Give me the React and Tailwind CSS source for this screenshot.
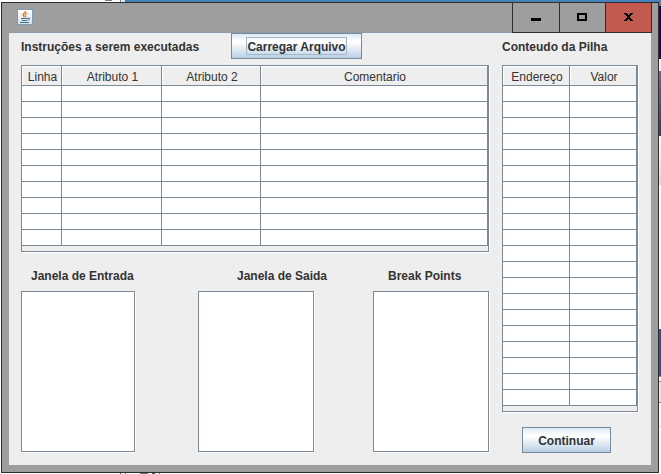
const rowsOf = (count) => Array.from({ length: count }, (_, i) => i);

function DataTable({ label, columns, rowCount }) {
  return (
    <div className="mr-px mb-px border border-[#7a8a99] pb-[5px] shadow-[1px_1px_0_0_#ffffff]">
      <table aria-label={label} className="w-full table-fixed border-separate border-spacing-0">
        <colgroup>
          {columns.map((c) => (
            <col key={c.name} className={c.width} />
          ))}
        </colgroup>
        <thead>
          <tr>
            {columns.map((c) => (
              <th
                key={c.name}
                scope="col"
                className="h-5 border-r border-b border-[#7a8a99] bg-[#eeeeee] p-0 pt-0.5 pl-0.5 text-center text-[12px] leading-4 font-normal whitespace-nowrap shadow-[inset_1px_1px_0_0_#ffffff]"
              >
                {c.name}
              </th>
            ))}
          </tr>
        </thead>
        <tbody>
          {rowsOf(rowCount).map((r) => (
            <tr key={r}>
              {columns.map((c) => (
                <td key={c.name} className="h-4 border-r border-b border-[#7a8a99] bg-white p-0" />
              ))}
            </tr>
          ))}
        </tbody>
      </table>
    </div>
  );
}

function MetalButton({ children, className, focused }) {
  return (
    <button
      type="button"
      className={`flex h-[26px] items-center justify-center border border-[#7a8a99] bg-[linear-gradient(#dde8f3_0%,#ffffff_30%,#ffffff_36%,#b8cfe5_100%)] text-[12px] font-bold whitespace-nowrap ${className}`}
    >
      <span className={`border pt-0.5 leading-[14px] ${focused ? "border-[#a3b8cc]" : "border-transparent"}`}>
        {children}
      </span>
    </button>
  );
}

function TextPane({ id, label, labelClass, boxClass }) {
  return (
    <div className="flex min-w-0 flex-col">
      <label htmlFor={id} className={`mb-[7px] text-[12px] leading-4 font-bold whitespace-nowrap ${labelClass}`}>
        {label}
      </label>
      <textarea
        id={id}
        className={`mb-px block h-[161px] grow resize-none border border-[#7a8a99] bg-white p-1 text-[12px] shadow-[1px_1px_0_0_#ffffff] outline-none ${boxClass}`}
      />
    </div>
  );
}

function JavaIcon() {
  return (
    <svg width="16" height="16" viewBox="0 0 16 16" aria-hidden="true">
      <defs>
        <linearGradient id="tile" x1="0" y1="0" x2="0" y2="1">
          <stop offset="0" stopColor="#ffffff" />
          <stop offset="1" stopColor="#d5dfe7" />
        </linearGradient>
      </defs>
      <rect x="0.5" y="0.5" width="15" height="15" fill="url(#tile)" stroke="#7e9db5" />
      <path d="M8.6 2C9.2 3.8 5.6 4.4 6.2 6.2C6.4 7 7 7.4 7.2 8.2" fill="none" stroke="#ee7d22" strokeWidth="1.5" />
      <path d="M10.4 4.2C8.4 5 7.8 5.7 8.4 6.6C8.9 7.3 8.7 7.9 8.2 8.4" fill="none" stroke="#ee7d22" strokeWidth="1.2" />
      <path d="M4 9.5H11M4.8 11.5H10.2M3 13.5H12" stroke="#42708f" />
      <path d="M11 9C13.4 8.6 13.2 10.8 10.8 11.2" fill="none" stroke="#42708f" />
    </svg>
  );
}

function TitleBar() {
  const base = "flex h-[31px] items-center justify-center border border-[#2e2e30]";
  return (
    <header className="relative -mt-px flex h-[31px] items-start justify-between">
      <div className="mt-[7px] ml-2">
        <JavaIcon />
      </div>
      <div className="-mr-px flex">
        <button type="button" aria-label="Minimizar" className={`${base} w-12`}>
          <svg width="12" height="9" viewBox="0 0 12 9">
            <rect x="1" y="5" width="10" height="3" fill="#000000" />
          </svg>
        </button>
        <button type="button" aria-label="Maximizar" className={`${base} -ml-px w-[47px]`}>
          <svg width="11" height="9" viewBox="0 0 11 9">
            <rect x="1" y="1" width="8" height="6" fill="none" stroke="#000000" strokeWidth="2" />
          </svg>
        </button>
        <button type="button" aria-label="Fechar" className={`${base} -ml-px w-[47px] bg-[#c35a50]`}>
          <svg width="9" height="9" viewBox="0 0 9 9">
            <path
              d="M0 0H3V1H4V2H5V1H6V0H9V1H8V2H7V3H6V5H7V6H8V7H9V8H6V7H5V6H4V7H3V8H0V7H1V6H2V5H3V3H2V2H1V1H0Z"
              fill="#000000"
            />
          </svg>
        </button>
      </div>
    </header>
  );
}

const instructionColumns = [
  { name: "Linha", width: "w-10" },
  { name: "Atributo 1", width: "w-[100px]" },
  { name: "Atributo 2", width: "w-[99px]" },
  { name: "Comentario", width: "w-auto" },
];

const stackColumns = [
  { name: "Endereço", width: "w-1/2" },
  { name: "Valor", width: "w-1/2" },
];

export default function App() {
  return (
    <div className="flex min-h-screen flex-col bg-white font-['Liberation_Sans',Arial,sans-serif] text-[#333333]">
      {/* Desktop showing above the window */}
      <div className="flex h-[2px] shrink-0">
        <div className="w-[105px]" />
        <div className="h-px w-[7px] bg-[#777b86]" />
        <div className="w-2" />
        <div className="w-px bg-[#8a8a8a]" />
        <div className="w-1 bg-[#e4e4e4]" />
        <div className="grow bg-[#4682b8]" />
      </div>

      <div className="flex grow">
        <div className="w-px shrink-0" />
        <div className="flex min-w-0 grow flex-col border border-[#2e2e30] bg-[#9e9e9e] px-[7px] pb-[7px]">
          <TitleBar />
          <main className="-mt-px flex grow gap-3 border-t border-[#8c9cad] bg-[#eeeeee] px-3 pb-3">
            <section className="flex min-w-0 grow flex-col">
              <div className="flex h-[26px] items-center">
                <h1 className="w-[210px] pt-0.5 text-[12px] leading-4 font-bold whitespace-nowrap">
                  Instruções a serem executadas
                </h1>
                <MetalButton className="w-[131px]" focused>
                  Carregar Arquivo
                </MetalButton>
              </div>
              <div className="mt-[6px]">
                <DataTable label="Instruções a serem executadas" columns={instructionColumns} rowCount={10} />
              </div>
              <div className="mt-[15px] grid grow grid-cols-[177fr_175fr_117fr]">
                <TextPane id="entrada" label="Janela de Entrada" labelClass="pl-[10px]" boxClass="w-[114px]" />
                <TextPane id="saida" label="Janela de Saida" labelClass="pl-[39px]" boxClass="w-[116px]" />
                <TextPane id="breaks" label="Break Points" labelClass="pl-[15px]" boxClass="w-[116px]" />
              </div>
            </section>

            <section className="flex w-[137px] shrink-0 flex-col">
              <div className="flex h-[26px] items-center">
                <h2 className="pt-0.5 text-[12px] leading-4 font-bold whitespace-nowrap">Conteudo da Pilha</h2>
              </div>
              <div className="mt-[6px]">
                <DataTable label="Conteudo da Pilha" columns={stackColumns} rowCount={20} />
              </div>
              <MetalButton className="mt-[14px] ml-5 w-[89px]">Continuar</MetalButton>
            </section>
          </main>
        </div>

        {/* Desktop showing to the right of the window */}
        <div className="flex w-[2px] shrink-0 flex-col">
          <div className="h-1 bg-[#4682b8]" />
          <div className="h-[53px] bg-[#04106a]" />
          <div className="h-3 bg-[#f4f4f4]" />
          <div className="h-[65px] bg-linear-to-b from-[#5b7099] to-[#27407e]" />
          <div className="h-[49px] bg-linear-to-b from-white to-[#dddddd]" />
          <div className="h-36" />
          <div className="h-[47px] bg-[#1f5a9f]" />
          <div className="h-px bg-[#8a8a8a]" />
          <div className="h-1" />
          <div className="h-px bg-[#8a8a8a]" />
          <div className="h-5 bg-[#e9e7e5]" />
          <div className="h-px bg-[#8a8a8a]" />
          <div className="h-[23px]" />
          <div className="h-px bg-[#dddddd]" />
        </div>
      </div>

      {/* Desktop showing below the window */}
      <div className="flex h-px shrink-0 gap-1 pl-[120px]">
        <div className="w-px bg-[#555555]" />
        <div className="w-px bg-[#777777]" />
        <div className="w-[6px]" />
        <div className="w-2 bg-[#66707a]" />
        <div className="w-[3px] bg-[#444444]" />
        <div className="w-px bg-[#777777]" />
      </div>
    </div>
  );
}
